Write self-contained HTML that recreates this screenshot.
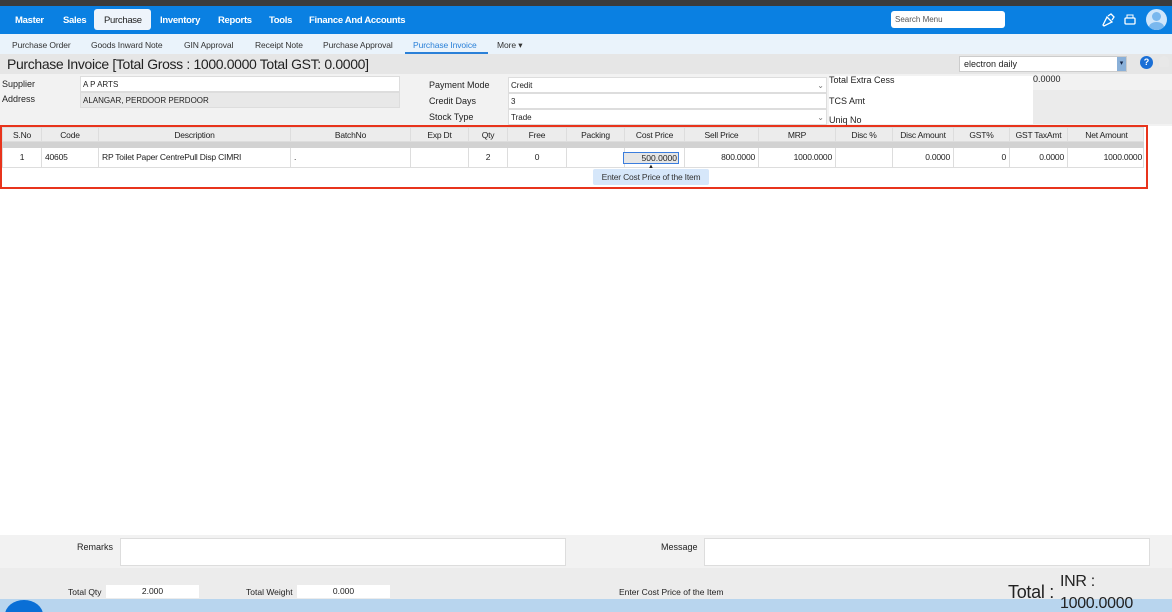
<!DOCTYPE html>
<html style="overflow:hidden;height:612px"><head><meta charset="utf-8"><style>
*{box-sizing:border-box;margin:0;padding:0}
body{width:1172px;height:612px;overflow:hidden;background:#fff;font-family:"Liberation Sans",sans-serif;font-size:9px;color:#222;position:relative}
.a{position:absolute}
.nav span{position:absolute;top:9px;color:#fff;font-weight:bold;font-size:9.5px;letter-spacing:-0.3px}
.sub span{position:absolute;top:6px;font-size:8.5px;color:#333;letter-spacing:-0.1px}
.inp{position:absolute;background:#fff;border:1px solid #ddd;font-size:8px;padding:3px 2px}
.th{position:absolute;top:0;height:15px;line-height:15px;text-align:center;border-right:1px solid #ddd;font-size:8.5px;letter-spacing:-0.2px}
.td{position:absolute;top:0;height:19px;line-height:19px;border-right:1px solid #ddd;font-size:8.5px;padding:0 3px;letter-spacing:-0.2px}
</style></head><body>
<div class="a" style="left:0;top:0;width:1172px;height:6px;background:#3b3b3b"></div>
<div class="a nav" style="left:0;top:6px;width:1172px;height:28px;background:#0a80e2">
<span style="left:15px">Master</span><span style="left:63px">Sales</span>
<div class="a" style="left:94px;top:3px;width:57px;height:21px;background:#eef4fb;border-radius:3px"></div>
<span style="left:104px;color:#222;font-weight:normal">Purchase</span>
<span style="left:160px">Inventory</span><span style="left:218px">Reports</span><span style="left:269px">Tools</span><span style="left:309px">Finance And Accounts</span>
<div class="a" style="left:891px;top:5px;width:114px;height:17px;background:#fff;border-radius:3px;color:#555;font-size:8px;padding:4px 4px">Search Menu</div>
<svg class="a" style="left:1100px;top:6px" width="16" height="16" viewBox="0 0 16 16"><path d="M3 13l4-8 5 5-8 4zM8 4l3-2 3 3-2 3" stroke="#fff" fill="none" stroke-width="1.3"/></svg>
<svg class="a" style="left:1123px;top:7px" width="14" height="14" viewBox="0 0 14 14"><rect x="2" y="5" width="10" height="6" rx="1" stroke="#fff" fill="none" stroke-width="1.3"/><rect x="4" y="2" width="6" height="3" stroke="#fff" fill="none"/></svg>
<div class="a" style="left:1146px;top:3px;width:21px;height:21px;border-radius:50%;background:#cfe6fb;overflow:hidden"><div class="a" style="left:6px;top:3px;width:9px;height:9px;border-radius:50%;background:#7ab8ee"></div><div class="a" style="left:3px;top:13px;width:15px;height:10px;border-radius:50%;background:#7ab8ee"></div></div>
</div>
<div class="a sub" style="left:0;top:34px;width:1172px;height:20px;background:#eaf3fb">
<span style="left:12px">Purchase Order</span><span style="left:91px">Goods Inward Note</span><span style="left:184px">GIN Approval</span><span style="left:255px">Receipt Note</span><span style="left:323px">Purchase Approval</span><span style="left:413px;color:#2a80d8">Purchase Invoice</span><span style="left:497px">More ▾</span>
<div class="a" style="left:405px;top:18px;width:83px;height:2px;background:#2a80d8"></div>
</div>
<div class="a" style="left:0;top:54px;width:1172px;height:20px;background:#e6e6e6"></div>
<div class="a" style="left:7px;top:56px;font-size:14px;letter-spacing:-0.35px;color:#222">Purchase Invoice [Total Gross : 1000.0000 Total GST: 0.0000]</div>
<div class="a" style="left:959px;top:56px;width:168px;height:16px;background:#fff;border:1px solid #ccc;font-size:9px;padding:2px 4px">electron daily</div>
<div class="a" style="left:1117px;top:57px;width:9px;height:14px;background:#8ab0d8;color:#124;font-size:7px;text-align:center;line-height:14px">▾</div>
<div class="a" style="left:1140px;top:56px;width:13px;height:13px;border-radius:50%;background:#1a6fd6;color:#fff;font-weight:bold;font-size:9px;text-align:center;line-height:13px">?</div>
<div class="a" style="left:1159px;top:56px;width:10px;height:11px;background:#e8e8e8;border-radius:5px 5px 1px 1px"></div>
<div class="a" style="left:0;top:74px;width:1172px;height:52px;background:#f2f2f2"></div>
<div class="a" style="left:2px;top:79px">Supplier</div><div class="a" style="left:2px;top:94px">Address</div>
<div class="inp" style="left:80px;top:76px;width:320px;height:16px">A P ARTS</div>
<div class="inp" style="left:80px;top:92px;width:320px;height:16px;background:#e8e8e8">ALANGAR, PERDOOR PERDOOR</div>
<div class="a" style="left:429px;top:80px">Payment Mode</div><div class="a" style="left:429px;top:96px">Credit Days</div><div class="a" style="left:429px;top:112px">Stock Type</div>
<div class="inp" style="left:508px;top:77px;width:319px;height:16px">Credit<span style="float:right;color:#777">⌄</span></div>
<div class="inp" style="left:508px;top:93px;width:319px;height:16px">3</div>
<div class="inp" style="left:508px;top:109px;width:319px;height:16px">Trade<span style="float:right;color:#777">⌄</span></div>
<div class="a" style="left:829px;top:76px;width:204px;height:48px;background:#fff"></div>
<div class="a" style="left:829px;top:75px">Total Extra Cess</div><div class="a" style="left:829px;top:96px">TCS Amt</div><div class="a" style="left:829px;top:115px">Uniq No</div>
<div class="a" style="left:1033px;top:74px">0.0000</div>
<div class="a" style="left:1033px;top:90px;width:139px;height:34px;background:#ebebeb"></div>
<div class="a" style="left:0;top:125px;width:1148px;height:64px;border:2px solid #e8341c;background:#fff"></div>
<div class="a" style="left:2px;top:127px;width:1142px;height:15px;background:#ececec;border:1px solid #ddd">
<div class="th" style="left:0;width:39px">S.No</div><div class="th" style="left:39px;width:57px">Code</div><div class="th" style="left:96px;width:192px">Description</div><div class="th" style="left:288px;width:120px">BatchNo</div><div class="th" style="left:408px;width:58px">Exp Dt</div><div class="th" style="left:466px;width:39px">Qty</div><div class="th" style="left:505px;width:59px">Free</div><div class="th" style="left:564px;width:58px">Packing</div><div class="th" style="left:622px;width:60px">Cost Price</div><div class="th" style="left:682px;width:74px">Sell Price</div><div class="th" style="left:756px;width:77px">MRP</div><div class="th" style="left:833px;width:57px">Disc %</div><div class="th" style="left:890px;width:61px">Disc Amount</div><div class="th" style="left:951px;width:56px">GST%</div><div class="th" style="left:1007px;width:58px">GST TaxAmt</div><div class="th" style="left:1065px;width:77px;border:0">Net Amount</div>
</div>
<div class="a" style="left:2px;top:142px;width:1142px;height:6px;background:#d2d2d2"></div>
<div class="a" style="left:2px;top:148px;width:1142px;height:20px;border:1px solid #ddd;border-top:0">
<div class="td" style="left:0;width:39px;text-align:center">1</div><div class="td" style="left:39px;width:57px">40605</div><div class="td" style="left:96px;width:192px">RP Toilet Paper CentrePull Disp CIMRI</div><div class="td" style="left:288px;width:120px">.</div><div class="td" style="left:408px;width:58px"></div><div class="td" style="left:466px;width:39px;text-align:center">2</div><div class="td" style="left:505px;width:59px;text-align:center">0</div><div class="td" style="left:564px;width:58px"></div><div class="td" style="left:622px;width:60px"></div><div class="td" style="left:682px;width:74px;text-align:right">800.0000</div><div class="td" style="left:756px;width:77px;text-align:right">1000.0000</div><div class="td" style="left:833px;width:57px"></div><div class="td" style="left:890px;width:61px;text-align:right">0.0000</div><div class="td" style="left:951px;width:56px;text-align:right">0</div><div class="td" style="left:1007px;width:58px;text-align:right">0.0000</div><div class="td" style="left:1065px;width:77px;text-align:right;border:0">1000.0000</div>
</div>
<div class="a" style="left:623px;top:152px;width:56px;height:12px;background:#e6e6e6;border:1px solid #3b7ddd;font-size:8.5px;text-align:right;line-height:10px;padding-right:1px">500.0000</div>
<div class="a" style="left:648px;top:164px;font-size:6px">▲</div>
<div class="a" style="left:593px;top:169px;width:116px;height:16px;background:#d6e7fa;border-radius:2px;font-size:8.5px;text-align:center;line-height:16px;color:#333;letter-spacing:-0.2px">Enter Cost Price of the Item</div>
<div class="a" style="left:0;top:535px;width:1172px;height:33px;background:#f2f2f2"></div>
<div class="a" style="left:77px;top:542px;font-size:9px">Remarks</div>
<div class="a" style="left:120px;top:538px;width:446px;height:28px;background:#fff;border:1px solid #ddd"></div>
<div class="a" style="left:661px;top:542px;font-size:9px">Message</div>
<div class="a" style="left:704px;top:538px;width:446px;height:28px;background:#fff;border:1px solid #ddd"></div>
<div class="a" style="left:0;top:568px;width:1172px;height:32px;background:#ececec"></div>
<div class="a" style="left:0;top:599px;width:1172px;height:13px;background:#b8d5ee"></div>
<div class="a" style="left:5px;top:600px;width:38px;height:12px;overflow:hidden"><div style="width:38px;height:30px;border-radius:50%;background:#0a6fd6"></div></div>
<div class="a" style="left:68px;top:587px;font-size:8.5px">Total Qty</div>
<div class="a" style="left:106px;top:585px;width:93px;height:13px;background:#fff;font-size:8.5px;text-align:center;line-height:13px">2.000</div>
<div class="a" style="left:246px;top:587px;font-size:8.5px">Total Weight</div>
<div class="a" style="left:297px;top:585px;width:93px;height:13px;background:#fff;font-size:8.5px;text-align:center;line-height:13px">0.000</div>
<div class="a" style="left:619px;top:587px;font-size:8.5px">Enter Cost Price of the Item</div>
<div class="a" style="left:1008px;top:582px;font-size:18px;letter-spacing:-0.3px">Total :</div>
<div class="a" style="left:1060px;top:571px;font-size:16px;line-height:22px;letter-spacing:-0.3px">INR :<br>1000.0000</div>
</body></html>
